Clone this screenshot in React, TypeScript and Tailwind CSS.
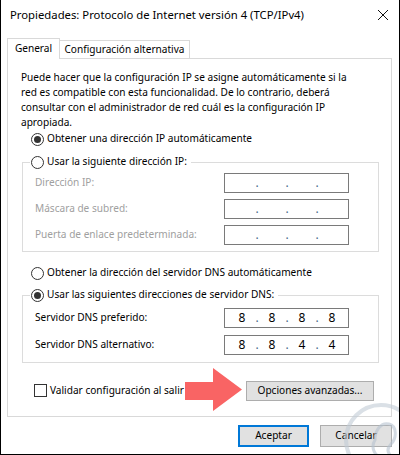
import React from 'react';

const font = { fontFamily: '"Noto Sans", "Segoe UI", sans-serif' };

const Radio = ({ checked }: { checked?: boolean }) => (
  <span className="w-[13px] h-[13px] rounded-full border border-[#333333] bg-white flex items-center justify-center shrink-0">
    {checked && <span className="w-[7px] h-[7px] rounded-full bg-[#333333]" />}
  </span>
);

const IpBox = ({ parts }: { parts: string[] }) => (
  <div className="w-[125px] h-[20px] border border-[#7a7a7a] bg-white flex items-center pl-[7px] text-[12px] text-black">
    {parts.map((p, i) => (
      <React.Fragment key={i}>
        <span className="w-[20px] text-center">{p}</span>
        {i < 3 && <span className="w-[10px] text-center text-[#4a6a8a]">.</span>}
      </React.Fragment>
    ))}
  </div>
);

const Row = ({ label, parts, disabled, tall }: { label: string; parts: string[]; disabled?: boolean; tall?: boolean }) => (
  <div className={`flex items-center justify-between pl-[12px] pr-[29px] ${tall ? 'h-[27px]' : 'h-[26px]'}`}>
    <span className={`whitespace-nowrap ${disabled ? 'text-[#a0a0a0]' : 'text-black'}`}>{label}</span>
    <IpBox parts={parts} />
  </div>
);

export default function App() {
  return (
    <div style={font} className="w-[400px] h-[455px] bg-white border-l border-r border-b border-black text-[10.1px] text-black relative overflow-hidden">
      {/* title bar */}
      <div className="h-[30px] flex items-center justify-between pl-[9px] pr-[9px]">
        <span className="text-[11.3px]">Propiedades: Protocolo de Internet versión 4 (TCP/IPv4)</span>
        <svg width="12" height="12" viewBox="0 0 12 12" className="mr-[1px]">
          <path d="M1 1 L11 11 M11 1 L1 11" stroke="#111" strokeWidth="1" />
        </svg>
      </div>

      <div className="pl-[6px] pr-[7px] pt-[8px]">
        {/* tabs */}
        <div className="flex items-end h-[20px]">
          <div className="w-[53px] h-[21px] flex items-center justify-center border border-b-0 border-[#d9d9d9] bg-white relative z-10 -mb-px">
            General
          </div>
          <div className="w-[130px] h-[18px] flex items-center justify-center border border-b-0 border-l-0 border-[#d9d9d9] bg-white">
            Configuración alternativa
          </div>
        </div>

        {/* panel */}
        <div className="h-[359px] border border-[#d9d9d9] pl-[13px] pr-[12px] pt-[11px] relative">
          <p className="leading-[15px] whitespace-nowrap">
            Puede hacer que la configuración IP se asigne automáticamente si la<br />
            red es compatible con esta funcionalidad. De lo contrario, deberá<br />
            consultar con el administrador de red cuál es la configuración IP<br />
            apropiada.
          </p>

          <div className="flex items-center gap-[3px] mt-[1px] pl-[10px] h-[16px]">
            <Radio checked />
            <span>Obtener una dirección IP automáticamente</span>
          </div>

          {/* group IP */}
          <div className="ml-[1px] mt-[15px] border border-[#dcdcdc] h-[90px]">
            <div className="flex items-center gap-[3px] -mt-[9px] ml-[7px] pl-[1px] pr-[4px] bg-white w-fit h-[16px]">
              <Radio />
              <span>Usar la siguiente dirección IP:</span>
            </div>
            <Row label="Dirección IP:" parts={['', '', '', '']} disabled />
            <Row label="Máscara de subred:" parts={['', '', '', '']} disabled />
            <Row label="Puerta de enlace predeterminada:" parts={['', '', '', '']} disabled />
          </div>

          <div className="flex items-center gap-[3px] mt-[13px] pl-[10px] h-[16px]">
            <Radio />
            <span>Obtener la dirección del servidor DNS automáticamente</span>
          </div>

          {/* group DNS */}
          <div className="ml-[1px] mt-[14px] border border-[#dcdcdc] h-[68px]">
            <div className="flex items-center gap-[3px] -mt-[9px] ml-[7px] pl-[1px] pr-[4px] bg-white w-fit h-[16px]">
              <Radio checked />
              <span>Usar las siguientes direcciones de servidor DNS:</span>
            </div>
            <div className="pt-[1px]">
              <Row label="Servidor DNS preferido:" parts={['8', '8', '8', '8']} tall />
              <Row label="Servidor DNS alternativo:" parts={['8', '8', '4', '4']} tall />
            </div>
          </div>

          {/* bottom row */}
          <div className="flex items-center justify-between mt-[18px] pl-[13px] pr-[5px]">
            <div className="flex items-center gap-[3px]">
              <span className="w-[13px] h-[13px] border border-[#333333] bg-white" />
              <span>Validar configuración al salir</span>
            </div>
            <div className="w-[128px] h-[20px] bg-[#e1e1e1] border border-[#adadad] flex items-center justify-center">
              Opciones avanzadas...
            </div>
          </div>

          {/* red arrow */}
          <svg width="58" height="43" viewBox="0 0 58 43" className="absolute left-[177px] top-[309px]">
            <path d="M0 14 H28 V0 L57 21.5 L28 43 V32 H0 Z" fill="#f96464" />
          </svg>
        </div>

        {/* dialog buttons */}
        <div className="flex justify-end gap-[11px] mt-[8px]">
          <div className="w-[71px] h-[22px] bg-[#e1e1e1] border-2 border-[#0078d7] flex items-center justify-center">
            Aceptar
          </div>
          <div className="w-[72px] h-[22px] bg-[#e1e1e1] border border-[#adadad] flex items-center justify-center">
            Cancelar
          </div>
        </div>
      </div>

      {/* watermark */}
      <svg width="80" height="70" viewBox="0 0 80 70" className="absolute left-[340px] top-[400px] opacity-60">
        <circle cx="40" cy="40" r="35" fill="none" stroke="#c2ccd6" strokeWidth="4" />
        <path d="M42 58 C 32 56, 30 46, 34 40 C 34 30, 40 22, 48 24 C 56 26, 56 38, 50 44 C 46 48, 46 52, 50 56 C 46 60, 40 60, 42 58" fill="none" stroke="#b6c3d0" strokeWidth="3" />
      </svg>
    </div>
  );
}
